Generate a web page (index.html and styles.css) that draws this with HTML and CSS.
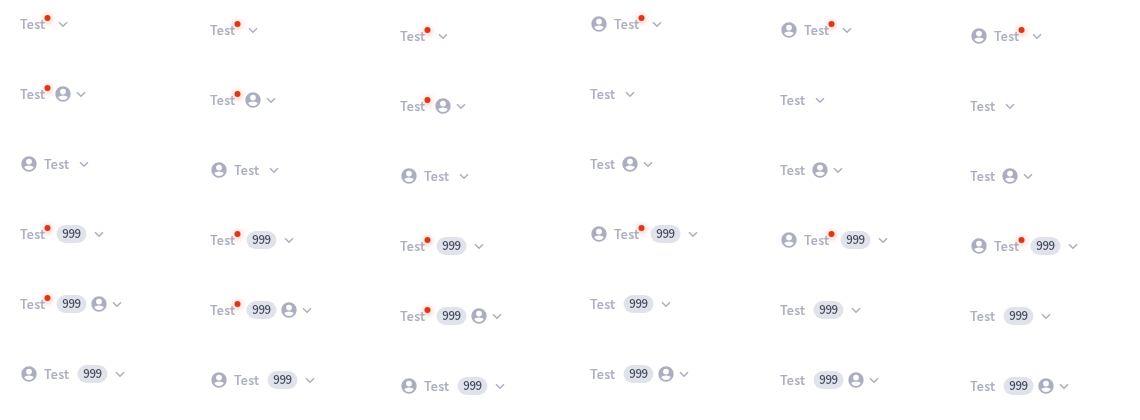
FILE: index.html
```html
<!DOCTYPE html>
<html lang="en">
<head>
<meta charset="utf-8">
<title>Tabs</title>
<link rel="stylesheet" href="styles.css">
</head>
<body>
<svg class="sprite" aria-hidden="true">
  <symbol id="user" viewBox="0 0 16 16"><path fill="currentColor" fill-rule="evenodd" d="M8 .3a7.700 7.700 0 1 0 0 15.400A7.700 7.700 0 0 0 8 .3ZM8 2.700a2.900 2.900 0 1 1 0 5.800A2.900 2.900 0 0 1 8 2.700Zm0 11.300a5.700 5.700 0 0 1-4.700-2.600C3.600 10.200 6.400 9.500 8 9.500s4.400.7 4.700 1.900A5.700 5.700 0 0 1 8 14Z"/></symbol>
  <symbol id="chevron" viewBox="0 0 16 16"><path fill="none" stroke="currentColor" stroke-width="1.500" d="m4 6.200 4 4 4-4"/></symbol>
</svg>
<main class="grid" id="grid"></main>
<script src="tabs.js"></script>
</body>
</html>
```
FILE: styles.css
```css
body {
  margin: 0;
  background: #fff;
  font-family: "Noto Sans CJK SC", "Noto Sans", sans-serif;
}
.sprite { display: none; }
.grid {
  display: grid;
  grid-template-columns: repeat(6, 190px);
  grid-auto-rows: 70px;
  will-change: transform;
}
.tab {
  display: flex;
  align-items: center;
  padding-left: 20px;
  color: #abaec0;
}
.size-s { height: 48px; }
.size-m { height: 60px; }
.size-l { height: 72px; }
.label {
  position: relative;
  width: 25px;
  font-size: 12.5px;
  font-weight: 500;
  letter-spacing: .2px;
  line-height: 20px;
  white-space: nowrap;
  -webkit-text-stroke: .15px currentColor;
}
.notified { margin-right: 3px; }
.dot {
  position: absolute;
  top: 1px;
  right: -5px;
  width: 6px;
  height: 6px;
  border-radius: 50%;
  background: #de3618;
  box-shadow: 0 1px 6px rgba(222, 54, 24, .6);
  transform: translateX(.5px);
}
.icon { width: 16px; height: 16px; flex: none; }
.lead { margin: 0 7px 0 1px; }
.badge {
  box-sizing: border-box;
  width: 30px;
  height: 18px;
  margin-left: 9px;
  border-radius: 9px;
  background: #e1e3eb;
  color: #464c5e;
  font-size: 11.5px;
  font-weight: 500;
  letter-spacing: -.4px;
  line-height: 17px;
  text-align: center;
  transform: translateX(-.5px);
}
.trail { margin-left: 7px; }
.badge + .trail { margin-left: 4px; }
.trail + .trail { margin-left: 2px; }
```
FILE: tabs.js
```js
const icon = (name, cls) => `<svg class="icon ${cls}"><use href="#${name}"/></svg>`;

// d: dot, l: leading icon, r: trailing icon
const rows = [['d', 'dl'], ['dr', ''], ['l', 'r']];
const sizes = ['s', 'm', 'l'];

function tab(options, size, badge) {
  const dot = options.includes('d');
  return `<div class="tab size-${size}">` +
    (options.includes('l') ? icon('user', 'lead') : '') +
    `<span class="label${dot ? ' notified' : ''}">Test${dot ? '<i class="dot"></i>' : ''}</span>` +
    (badge ? '<span class="badge">999</span>' : '') +
    (options.includes('r') ? icon('user', 'trail') : '') +
    icon('chevron', 'trail') + '</div>';
}

document.getElementById('grid').innerHTML = [false, true].map(badge =>
  rows.map(row => row.map(options =>
    sizes.map(size => tab(options, size, badge)).join('')).join('')).join('')).join('');
```
